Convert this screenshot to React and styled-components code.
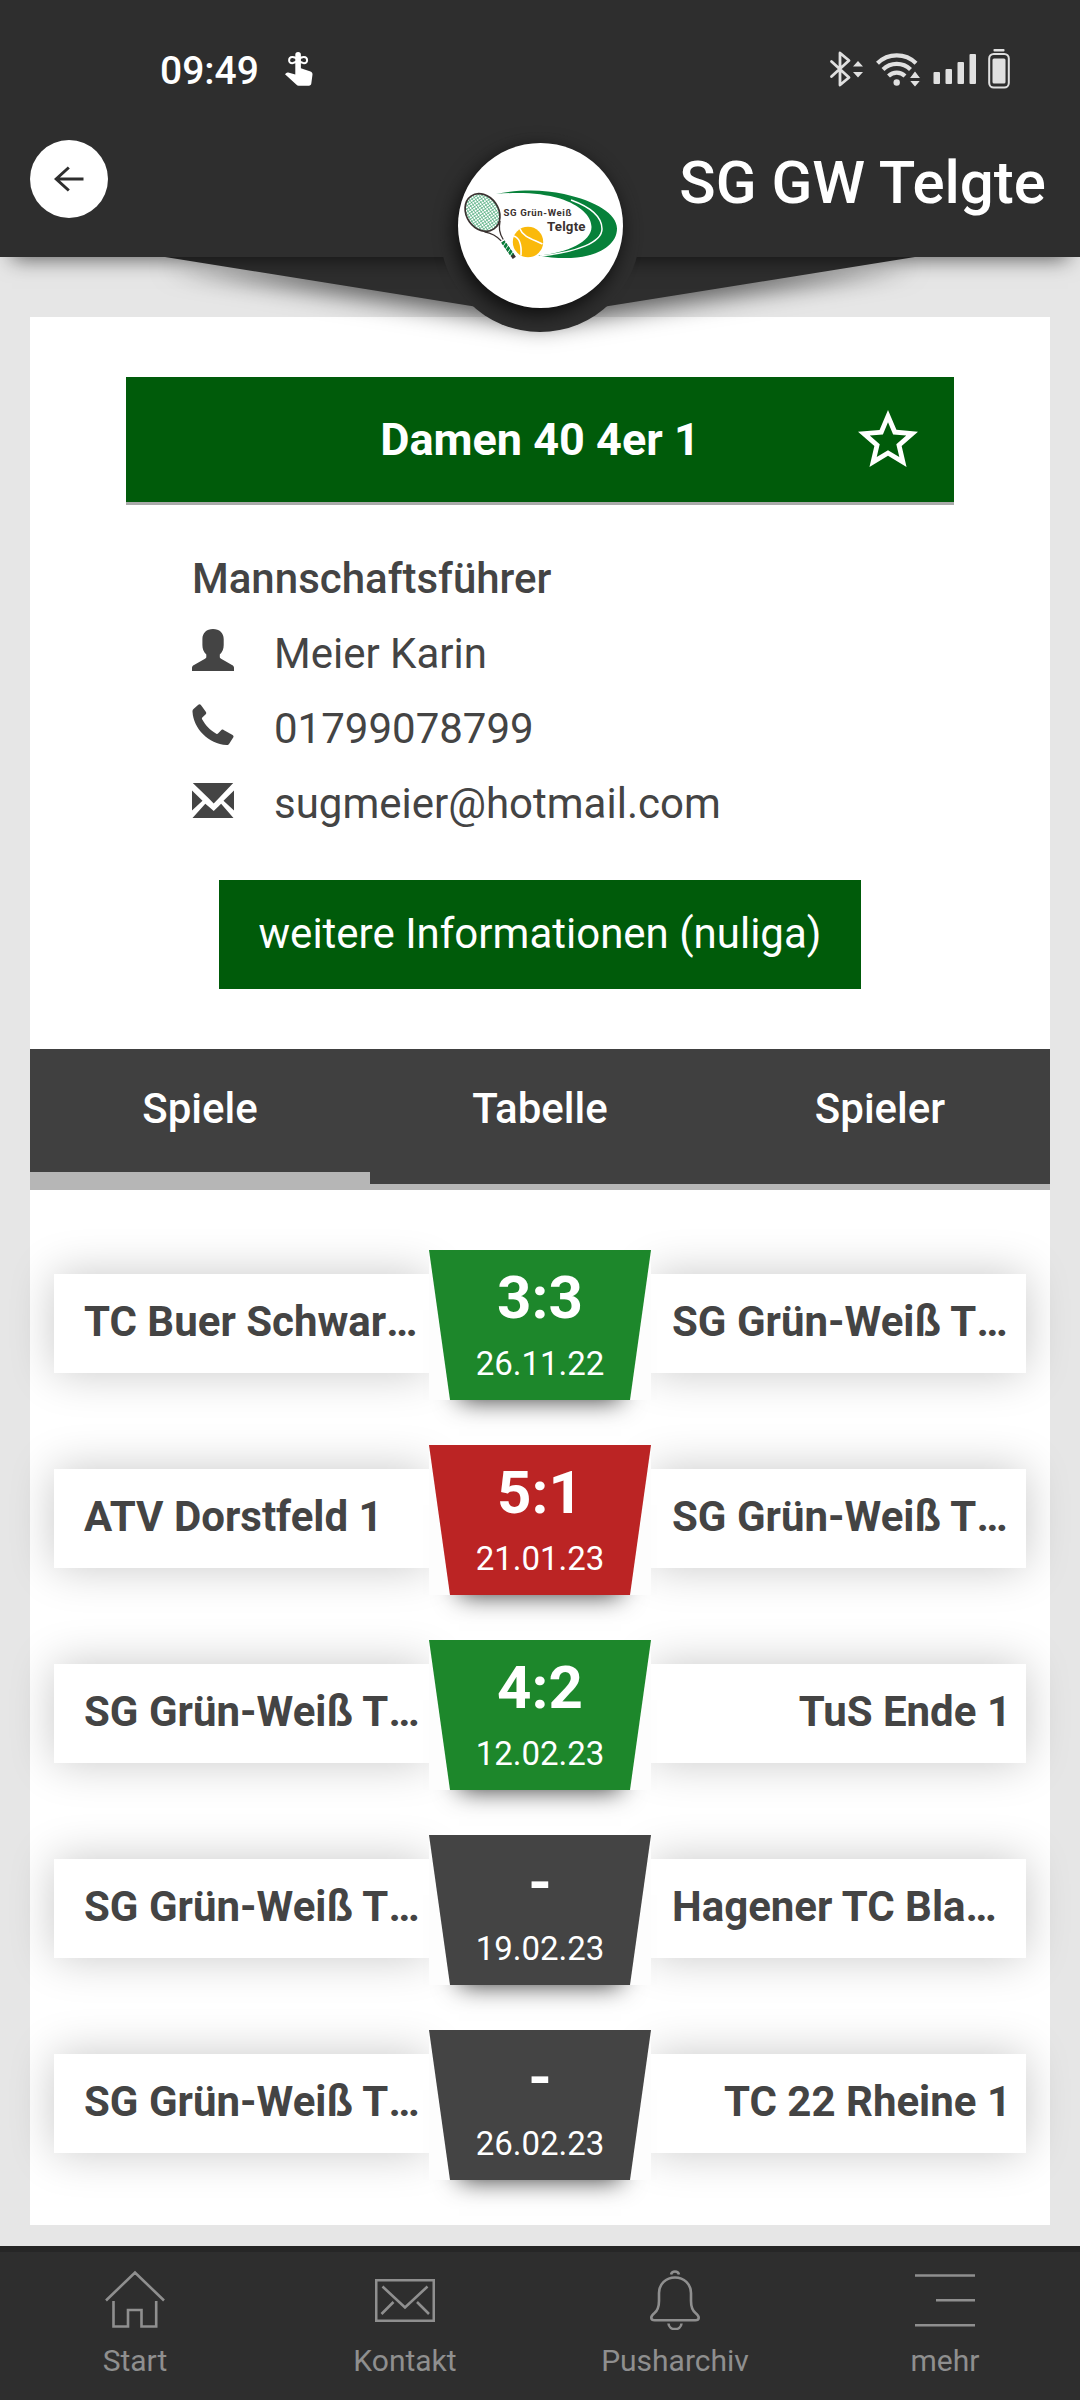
import styled, { createGlobalStyle } from "styled-components";
import { MdStarBorder } from "react-icons/md";

const GlobalStyle = createGlobalStyle`
  * {
    box-sizing: border-box;
    margin: 0;
    padding: 0;
  }

  body {
    background: #e6e6e6;
    color: #444;
    font-family: Roboto, "Liberation Sans", sans-serif;
    font-size: 42px;
  }
`;

const games = [
  { home: "TC Buer Schwar…", guest: "SG Grün-Weiß T…", score: "3:3", date: "26.11.22", color: "#1d872b" },
  { home: "ATV Dorstfeld 1", guest: "SG Grün-Weiß T…", score: "5:1", date: "21.01.23", color: "#bb2424" },
  { home: "SG Grün-Weiß T…", guest: "TuS Ende 1", score: "4:2", date: "12.02.23", color: "#1d872b" },
  { home: "SG Grün-Weiß T…", guest: "Hagener TC Bla…", score: "-", date: "19.02.23", color: "#444" },
  { home: "SG Grün-Weiß T…", guest: "TC 22 Rheine 1", score: "-", date: "26.02.23", color: "#444" },
];

const ReminderIcon = () => (
  <svg width="28" height="34" viewBox="0 0 28 34" fill="#fff">
    <path d="M10.3 2.8a2.8 2.8 0 0 1 5.6 0v13.4l9.6 3.3c1.4.5 2.1 1.6 2 3l-1.2 9c-.2 1.4-1 2.2-2.4 2.2H13.6c-.8 0-1.5-.3-2.1-.9L0 22.3 1.3 21c.5-.5 1.2-.7 1.9-.5l7.1 1.9z" />
    <path
      d="M13.1 8c-3.5-4.3-9-4-9 .2s5.5 3.9 9-.2c3.5-4.3 9-4 9 .2s-5.5 3.9-9-.2z"
      fill="none"
      stroke="#fff"
      strokeWidth="2"
    />
  </svg>
);

const BluetoothIcon = () => (
  <svg width="36" height="36" viewBox="0 0 36 36" fill="#e0e0e0">
    <path
      d="M2.5 10.5L20 26.5l-9 7.5V2l9 7.5L2.5 25.5"
      fill="none"
      stroke="#e0e0e0"
      strokeWidth="2.8"
      strokeLinejoin="round"
      strokeLinecap="round"
    />
    <path d="M24 15.5l5-5.5 5 5.5zM24 21h10l-5 5.5z" />
  </svg>
);

const WifiIcon = () => (
  <svg width="46" height="36" viewBox="0 0 46 36" fill="#e0e0e0">
    <g fill="none" stroke="#e0e0e0" strokeWidth="4.2">
      <path d="M1.5 12.3a27.5 27.5 0 0 1 38.5 0" />
      <path d="M7 18.5a19.5 19.5 0 0 1 27.5 0" />
      <path d="M12.5 25a12 12 0 0 1 16.5 0" />
    </g>
    <circle cx="20.7" cy="31.5" r="3.2" />
    <path d="M33 27.5l6-8 6 8zM33 29.5h12l-6 7z" stroke="#2e2e2e" strokeWidth="1.2" />
  </svg>
);

const SignalIcon = () => (
  <svg width="44" height="30" viewBox="0 0 44 30" fill="#e0e0e0">
    <rect x="0.5" y="18" width="6.5" height="12" rx="1" />
    <rect x="12.5" y="15" width="6.5" height="15" rx="1" />
    <rect x="24.5" y="8" width="6.5" height="22" rx="1" />
    <rect x="36.5" y="0" width="6.5" height="30" rx="1" />
  </svg>
);

const BatteryIcon = () => (
  <svg width="22" height="40" viewBox="0 0 22 40">
    <rect x="5.5" y="0" width="11" height="2.6" rx="0.8" fill="#e0e0e0" />
    <rect x="1.2" y="5" width="19.6" height="33.5" rx="4.5" fill="none" stroke="#e0e0e0" strokeWidth="2" />
    <rect x="4.5" y="9.5" width="13" height="25" rx="1.5" fill="#e0e0e0" />
  </svg>
);

const BackIcon = () => (
  <svg width="30" height="26" viewBox="0 0 30 26" fill="none" stroke="#2e2e2e" strokeWidth="3">
    <path d="M29.5 13H2M14.8 1.5L2.2 13l12.6 11.5" />
  </svg>
);

const ClubLogo = () => (
  <svg width="165" height="165" viewBox="0 0 165 165">
    <defs>
      <pattern id="strings" width="2.6" height="2.6" patternUnits="userSpaceOnUse">
        <path d="M0 0h2.6M0 0v2.6" stroke="#4fab7c" strokeWidth="1.3" />
      </pattern>
    </defs>
    <path
      d="M38 51c24-5 48-4.500 68 0 32 7 53 20 53 34.500 0 18-22 28.500-46 29.500-12 .4-23-.6-33-2.500 30-2.500 53.500-14 53.500-28.500C133.500 73 122 62 102 55.500 84 50 62 48.700 38 51z"
      fill="#07813a"
    />
    <path d="M113 57c22 8 31 18 31 29 0 13-24 23-62 27" fill="none" stroke="#fff" strokeWidth="1.5" />
    <g transform="rotate(-35 24.5 69.5)">
      <ellipse cx="24.5" cy="69.5" rx="16" ry="20" fill="url(#strings)" stroke="#3a3130" strokeWidth="1.7" />
      <path d="M15 86.5c5 5 7.500 9 8.500 17M34 86.500c-5 5-7.500 9-8 17" fill="none" stroke="#3a3130" strokeWidth="1.3" />
      <path d="M24.5 105v20" stroke="#3a3130" strokeWidth="3.8" />
      <path d="M24.5 105v16.5" stroke="#07813a" strokeWidth="3.8" />
      <path d="M22 109l5-2M22 113l5-2M22 117l5-2M22 121l5-2" stroke="#fff" strokeWidth="0.8" />
    </g>
    <circle cx="70" cy="99" r="15.2" fill="#fab90b" />
    <path
      d="M62 86c3 8 12 10 22.500 15M55.500 93c8 2 8 12 7.500 19.500"
      fill="none"
      stroke="#fff"
      strokeWidth="1.6"
    />
    <g fill="#3a3130" fontFamily="Roboto, sans-serif" fontWeight="700">
      <text x="45.5" y="72.7" fontSize="9.6" textLength="68">SG Grün-Weiß</text>
      <text x="89" y="88.3" fontSize="13.3" textLength="38.5">Telgte</text>
    </g>
  </svg>
);

const PersonIcon = () => (
  <svg width="42" height="42" viewBox="0 0 42 42" fill="#444">
    <path d="M21 0c6.500 0 10.700 4 10.700 10v6c0 4-1.200 7-3.900 9.500v2.200c0 1 .4 1.500 1.300 2L40 36c1.400.8 2 1.600 2 2.800V42H0v-3.200c0-1.200.6-2 2-2.800l11-6.300c.9-.5 1.300-1 1.300-2v-2.200c-2.700-2.500-3.900-5.500-3.900-9.500v-6C10.400 4 14.500 0 21 0z" />
  </svg>
);

const PhoneIcon = () => (
  <svg width="42" height="42" viewBox="0 0 42 42" fill="#444">
    <path d="M6.300.7c.9-.8 1.900-.7 2.600.3l4.900 6.800c.7 1 .6 1.900-.3 2.700l-3.200 3c-.5.500-.5 1-.2 1.700 3.700 6.500 7.800 10.700 14.200 14.500.7.400 1.200.3 1.700-.2l2.900-3.100c.8-.9 1.700-1 2.700-.4l9 5c1 .6 1.200 1.500.6 2.500l-4 6.300c-.6 1-1.400 1.300-2.600 1.200C16.500 40 1.500 24.500.5 7.700.4 6.600.700 5.800 1.500 5z" />
  </svg>
);

const MailIcon = () => (
  <svg width="42" height="35" viewBox="0 0 42 35" fill="#444">
    <path d="M.8 0h40.400L26.300 15.800l-4.600 4.700-4.600-4.700zM0 7.500l10.500 10.300L0 27.500zM42 7.500v20L31.500 17.800zM13.300 20.800l3.600 3 4.800 4.300 4.400-4.300 3-3L41.500 35H.5z" />
  </svg>
);

const HomeIcon = () => (
  <svg width="60" height="60" viewBox="0 0 60 60">
    <path d="M1 30.5L30 2.5l29 28M8.5 31v25.5H23V40h13.5v16.5h14.7V31" />
  </svg>
);

const LetterIcon = () => (
  <svg width="60" height="60" viewBox="0 0 60 60">
    <path d="M1.2 10.3h57.6v40.4H1.2zM7.5 16.5L30 37.5l22.5-21M18.5 32L6.5 44M42 32l12 12" />
  </svg>
);

const BellIcon = () => (
  <svg width="60" height="60" viewBox="0 0 60 60">
    <path d="M26 4.500c1-4 7-4 8 0M30 7.500c-9 0-16 6.500-16 15.500v8c0 6-1.500 9.500-4.500 12-5 4-3.500 7.300 0 7.300h41c3.500 0 5-3.300 0-7.300-3-2.500-4.500-6-4.500-12v-8c0-9-7-15.500-16-15.500zM23.500 53.500c.5 7.500 12.500 7.500 13 0" />
  </svg>
);

const MenuIcon = () => (
  <svg width="60" height="60" viewBox="0 0 60 60">
    <path d="M0 5.5h60M21 30.2h39M0 55.3h60" />
  </svg>
);

const tabs = [
  { label: "Start", Icon: HomeIcon },
  { label: "Kontakt", Icon: LetterIcon },
  { label: "Pusharchiv", Icon: BellIcon },
  { label: "mehr", Icon: MenuIcon },
];

// shortened names keep their dots in an own box, so they are not kerned into the last letter
const TeamLabel = ({ name, guest }) => {
  const cut = name.endsWith("…");
  return (
    <Team $guest={guest} $cut={cut}>
      {cut ? name.slice(0, -1) : name}
      {cut && <Dots>…</Dots>}
    </Team>
  );
};

const App = () => {
  return (
    <>
      <GlobalStyle />
      <Screen>
        <HeaderArea>
          <Wing>
            <WingShape />
          </Wing>
          <Header>
            <StatusBar>
              <Clock>09:49</Clock>
              <ReminderIcon />
              <StatusIcons>
                <BluetoothIcon />
                <WifiIcon />
                <SignalIcon />
                <BatteryIcon />
              </StatusIcons>
            </StatusBar>
            <Toolbar>
              <BackButton aria-label="Zurück">
                <BackIcon />
              </BackButton>
              <Title>SG GW Telgte</Title>
            </Toolbar>
          </Header>
          <Emblem>
            <EmblemDisc>
              <ClubLogo />
            </EmblemDisc>
          </Emblem>
        </HeaderArea>

        <Card>
          <TeamBar>
            <TeamName>Damen 40 4er 1</TeamName>
            <MdStarBorder size={72} />
          </TeamBar>
          <Contact>
            <ContactHeading>Mannschaftsführer</ContactHeading>
            <ContactRow>
              <PersonIcon />
              <span>Meier Karin</span>
            </ContactRow>
            <ContactRow>
              <PhoneIcon />
              <span>01799078799</span>
            </ContactRow>
            <ContactRow>
              <MailIcon />
              <span>sugmeier@hotmail.com</span>
            </ContactRow>
          </Contact>
          <InfoButton>weitere Informationen (nuliga)</InfoButton>
          <TabBar>
            <Tab $active>Spiele</Tab>
            <Tab>Tabelle</Tab>
            <Tab>Spieler</Tab>
          </TabBar>
          <Games>
            {games.map((game) => (
              <Game key={game.date}>
                <TeamLabel name={game.home} />
                <Result>
                  <Plate $color={game.color}>
                    <Score>{game.score}</Score>
                    <GameDate>{game.date}</GameDate>
                  </Plate>
                </Result>
                <TeamLabel name={game.guest} guest />
              </Game>
            ))}
          </Games>
        </Card>

        <BottomNav>
          {tabs.map(({ label, Icon }) => (
            <NavItem key={label}>
              <Icon />
              <span>{label}</span>
            </NavItem>
          ))}
        </BottomNav>
      </Screen>
    </>
  );
};

const Screen = styled.div`
  display: flex;
  flex-direction: column;
  width: 1080px;
  height: 2400px;
  overflow: hidden;
`;

const HeaderArea = styled.div`
  position: relative;
  z-index: 1;
  height: 257px;
  margin-bottom: 60px;
`;

const Header = styled.header`
  position: relative;
  height: 257px;
  background: #2e2e2e;
  box-shadow: 0 14px 20px -12px rgba(0, 0, 0, 0.6);
`;

/* the pointed flap hanging below the header */
const Wing = styled.div`
  position: absolute;
  top: 257px;
  left: 165px;
  filter: drop-shadow(0 9px 12px rgba(0, 0, 0, 0.6));
`;

const WingShape = styled.div`
  width: 750px;
  height: 60px;
  background: #2e2e2e;
  clip-path: polygon(0 0, 100% 0, 50% 100%);
`;

const Emblem = styled.div`
  position: absolute;
  top: 132px;
  left: 440px;
  display: flex;
  justify-content: center;
  width: 200px;
  height: 200px;
  padding-top: 11px;
  border-radius: 50%;
  background: #2e2e2e;
`;

const EmblemDisc = styled.div`
  width: 165px;
  height: 165px;
  border-radius: 50%;
  background: #fff;
  box-shadow: -3px 6px 20px rgba(0, 0, 0, 0.75);
  overflow: hidden;
`;

const StatusBar = styled.div`
  display: flex;
  align-items: center;
  height: 140px;
  padding: 0 70px 2px 160px;
`;

const Clock = styled.span`
  width: 125px;
  padding-top: 3px;
  color: #fff;
  font-size: 39px;
  font-weight: 500;
`;

const StatusIcons = styled.div`
  display: flex;
  align-items: center;
  gap: 11px;
  margin-left: auto;
`;

const Toolbar = styled.div`
  display: flex;
  align-items: center;
  justify-content: space-between;
  height: 78px;
  padding: 0 34px 0 30px;
`;

const BackButton = styled.button`
  display: flex;
  align-items: center;
  justify-content: center;
  width: 78px;
  height: 78px;
  border: 0;
  border-radius: 50%;
  background: #fff;
`;

const Title = styled.h1`
  padding-top: 8px;
  color: #fff;
  font-size: 60px;
  font-weight: 500;
  line-height: 78px;
`;

const Card = styled.main`
  display: flex;
  flex-direction: column;
  align-items: center;
  height: 1908px;
  margin: 0 30px;
  padding-top: 60px;
  background: #fff;
`;

const TeamBar = styled.div`
  display: grid;
  grid-template-columns: 72px 1fr 72px;
  align-items: center;
  width: 828px;
  height: 128px;
  padding: 0 30px;
  border-bottom: 3px solid #aaa;
  background: #005b0a;
  color: #fff;
`;

const TeamName = styled.h2`
  grid-column: 2;
  font-size: 45px;
  font-weight: 700;
  text-align: center;
`;

const Contact = styled.section`
  width: 696px;
  margin-top: 36px;
`;

const ContactHeading = styled.h3`
  font-size: 42px;
  font-weight: 500;
  line-height: 75px;
`;

const ContactRow = styled.div`
  display: flex;
  align-items: center;
  gap: 40px;
  height: 75px;

  svg {
    margin-bottom: 7px;
  }
`;

const InfoButton = styled.button`
  width: 642px;
  height: 109px;
  margin-top: 39px;
  padding-bottom: 2px;
  border: 0;
  background: #005b0a;
  color: #fff;
  font: inherit;
`;

const TabBar = styled.nav`
  display: flex;
  width: 100%;
  height: 141px;
  margin-top: 60px;
  border-bottom: 6px solid #b6b6b6;
  background: #404040;
`;

const Tab = styled.div`
  flex: 1;
  height: 135px;
  border-bottom: 12px solid ${({ $active }) => ($active ? "#b6b6b6" : "transparent")};
  color: #fff;
  font-weight: 500;
  line-height: 120px;
  text-align: center;
`;

const Games = styled.div`
  display: flex;
  flex-direction: column;
  gap: 45px;
  padding-top: 60px;
`;

const Game = styled.div`
  display: flex;
  align-items: center;
  width: 972px;
  height: 150px;
`;

const Team = styled.div`
  width: 375px;
  height: 99px;
  margin-bottom: 3px;
  padding: ${({ $guest }) => ($guest ? "0 15px 0 21px" : "0 5px 0 30px")};
  background: #fff;
  box-shadow: 0 0 45px rgba(0, 0, 0, 0.22);
  font-weight: 700;
  line-height: 96px;
  white-space: nowrap;
  text-align: ${({ $guest, $cut }) => ($guest && !$cut ? "right" : "left")};
`;

const Dots = styled.span`
  display: inline-block;
`;

const Result = styled.div`
  position: relative;
  z-index: 1;
  width: 222px;
  height: 150px;
  background: #fdfdfd;
  box-shadow: 0 30px 24px -30px rgba(0, 0, 0, 0.8);
`;

const Plate = styled.div`
  display: flex;
  flex-direction: column;
  align-items: center;
  height: 150px;
  background: ${({ $color }) => $color};
  clip-path: polygon(0 0, 100% 0, 201px 100%, 21px 100%);
  color: #fff;
`;

const Score = styled.strong`
  font-size: 60px;
  font-weight: 700;
  line-height: 96px;
`;

const GameDate = styled.span`
  font-size: 33px;
  line-height: 35px;
`;

const BottomNav = styled.footer`
  display: flex;
  height: 154px;
  margin-top: 21px;
  border-top: 6px solid #262626;
  background: #2e2e2e;
`;

const NavItem = styled.div`
  display: flex;
  flex: 1;
  flex-direction: column;
  align-items: center;
  padding-top: 18px;
  color: #8f8f8f;
  font-size: 30px;
  line-height: 62px;

  svg {
    fill: none;
    stroke: #8f8f8f;
    stroke-width: 2.6;
  }
`;

export default App;
